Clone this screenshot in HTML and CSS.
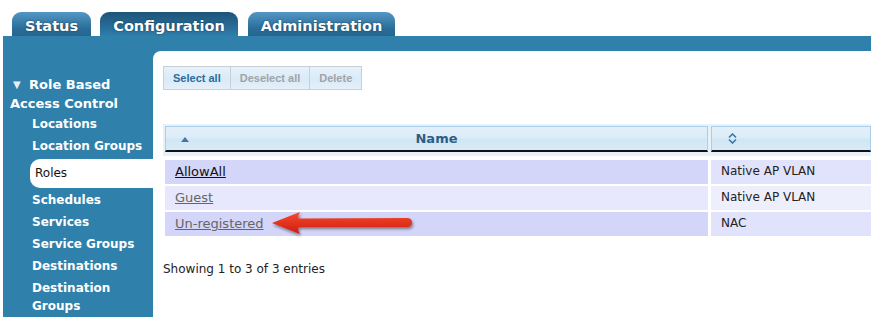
FILE: index.html
```html
<!DOCTYPE html>
<html>
<head>
<meta charset="utf-8">
<link rel="stylesheet" href="styles.css">
</head>
<body>
<div class="tabs">
  <div class="tab t1">Status</div>
  <div class="tab t2 active">Configuration</div>
  <div class="tab t3">Administration</div>
</div>
<div class="frame">
  <div class="sidebar">
    <div class="group"><span class="tri">▼</span>Role Based Access Control</div>
    <div class="item">Locations</div>
    <div class="item">Location Groups</div>
    <div class="item selected">Roles</div>
    <div class="item">Schedules</div>
    <div class="item">Services</div>
    <div class="item">Service Groups</div>
    <div class="item">Destinations</div>
    <div class="item wrap">Destination Groups</div>
  </div>
  <div class="content">
    <div class="buttons">
      <div class="btn on">Select all</div>
      <div class="btn">Deselect all</div>
      <div class="btn">Delete</div>
    </div>
    <div class="grid">
      <div class="thead">
        <div class="th c1">
          <svg class="sort" width="8" height="5" viewBox="0 0 8 5"><path d="M4 0 L8 5 L0 5 Z" fill="#3a78a8"/></svg>
          <span class="thname">Name</span>
        </div>
        <div class="th c2">
          <svg class="sort2" width="9" height="11" viewBox="0 0 9 11"><path d="M1 4.5 L4.5 1 L8 4.5 M1 6.5 L4.5 10 L8 6.5" fill="none" stroke="#3a78a8" stroke-width="1.6"/></svg>
        </div>
      </div>
      <div class="row odd">
        <div class="td c1"><a class="link first">AllowAll</a></div>
        <div class="td c2">Native AP VLAN</div>
      </div>
      <div class="row even">
        <div class="td c1"><a class="link">Guest</a></div>
        <div class="td c2">Native AP VLAN</div>
      </div>
      <div class="row odd">
        <div class="td c1"><a class="link">Un-registered</a></div>
        <div class="td c2">NAC</div>
      </div>
    </div>
    <div class="info">Showing 1 to 3 of 3 entries</div>
  </div>
</div>
<svg class="arrow" width="150" height="36" viewBox="0 0 150 36">
  <defs>
    <linearGradient id="ag" x1="0" y1="0" x2="0" y2="1">
      <stop offset="0" stop-color="#f44a30"/>
      <stop offset="1" stop-color="#d01c0c"/>
    </linearGradient>
    <filter id="sh" x="-10%" y="-30%" width="120%" height="170%">
      <feDropShadow dx="1" dy="2" stdDeviation="1.6" flood-color="#000" flood-opacity="0.45"/>
    </filter>
  </defs>
  <path d="M4 16 L32 5 Q29 10 31 11.5 L139 11 Q144 11 144 15.5 Q144 20 139 20 L31 20 Q29 22 32 27 Z" fill="url(#ag)" filter="url(#sh)"/>
</svg>
</body>
</html>
```

FILE: styles.css
```css
html, body {
  margin: 0;
  padding: 0;
  background: #ffffff;
  width: 871px;
  height: 317px;
  overflow: hidden;
  position: relative;
  font-family: "DejaVu Sans", Verdana, sans-serif;
}

.tabs {
  display: flex;
  padding: 12px 0 0 12px;
  height: 24px;
}

.tab {
  height: 24px;
  border-radius: 9px 9px 0 0;
  background: linear-gradient(#5497c4, #2a6d98 70%, #24668f);
  color: #ffffff;
  font-weight: bold;
  font-size: 14.5px;
  line-height: 29px;
  text-align: center;
  text-shadow: 0 0 2px rgba(0, 0, 0, 0.5);
}

.t1 { width: 79px; }
.t2 { width: 138px; margin-left: 9px; }
.t3 { width: 147px; margin-left: 10px; }

.tab.active {
  background: linear-gradient(#1d5479, #2a6f9b 70%, #2f7fab);
}

.frame {
  margin-left: 3px;
  background: #2f80ab;
  padding-top: 15px;
  display: flex;
  height: 266px;
}

.sidebar {
  width: 150px;
  flex: none;
  padding-top: 25px;
  color: #ffffff;
  font-weight: bold;
  font-size: 12px;
}

.group {
  font-size: 13px;
  line-height: 18px;
  padding-left: 7px;
  width: 135px;
}

.tri {
  display: inline-block;
  width: 16px;
  margin-left: 3px;
  font-size: 10px;
  position: relative;
  top: -1px;
  color: #e6eef5;
}

.item {
  line-height: 22px;
  padding-left: 29px;
}

.item.selected {
  margin: 2px 0 1px 27px;
  padding-left: 5px;
  background: #ffffff;
  color: #111111;
  font-weight: normal;
  line-height: 29px;
  border-radius: 10px 0 0 10px;
}

.item.wrap {
  line-height: 18px;
  padding-top: 2px;
  width: 100px;
}

.content {
  flex: 1;
  background: #ffffff;
  border-top-left-radius: 8px;
  padding: 15px 0 0 10px;
}

.buttons {
  display: flex;
  width: max-content;
  border: 1px solid #c9cfd6;
  font-family: "Liberation Sans", Arial, sans-serif;
  font-weight: bold;
  font-size: 11px;
}

.btn {
  height: 22px;
  line-height: 22px;
  padding: 0 9px;
  color: #a0a4a8;
  background: linear-gradient(#e6f2fb, #d9eaf7 55%, #e4f0fa);
  border-left: 1px solid #c9cfd6;
}

.btn.on {
  color: #2d6c9c;
  border-left: none;
}

.grid {
  margin-top: 34px;
}

.thead {
  display: flex;
  gap: 3px;
  background: #e6f1fa;
  padding: 2px 0 4px 2px;
}

.th {
  height: 23px;
  border: 1px solid #abcde8;
  border-bottom: 2px solid #111111;
  background: linear-gradient(#e3f0fb, #dcecf8 45%, #d1e6f5 55%, #d8eaf7);
  display: flex;
  align-items: center;
  position: relative;
}

.c1 {
  width: 541px;
  flex: none;
}

.c2 {
  flex: 1;
}

.td.c1 {
  width: 533px;
}

.sort {
  position: absolute;
  left: 15px;
  top: 10px;
}

.sort2 {
  margin-left: 16px;
}

.thname {
  flex: 1;
  text-align: center;
  font-weight: bold;
  font-size: 13px;
  color: #2a5e88;
}

.row {
  display: flex;
  gap: 3px;
  margin: 2px 0 0 2px;
}

.thead + .row {
  margin-top: 4px;
}

.td {
  height: 24px;
  line-height: 23px;
  font-size: 12px;
  color: #222222;
  padding-left: 10px;
}

.row.odd .c1 { background: #d3d5f9; }
.row.odd .c2 { background: #e1e2fc; }
.row.even .c1 { background: #e7e8fd; }
.row.even .c2 { background: #eeeffd; }

.link {
  color: #666666;
  text-decoration: underline;
  font-size: 13px;
}

.link.first {
  color: #111111;
}

.info {
  margin-top: 26px;
  font-size: 12px;
  color: #222222;
}

.arrow {
  position: absolute;
  left: 268px;
  top: 207px;
}
```
